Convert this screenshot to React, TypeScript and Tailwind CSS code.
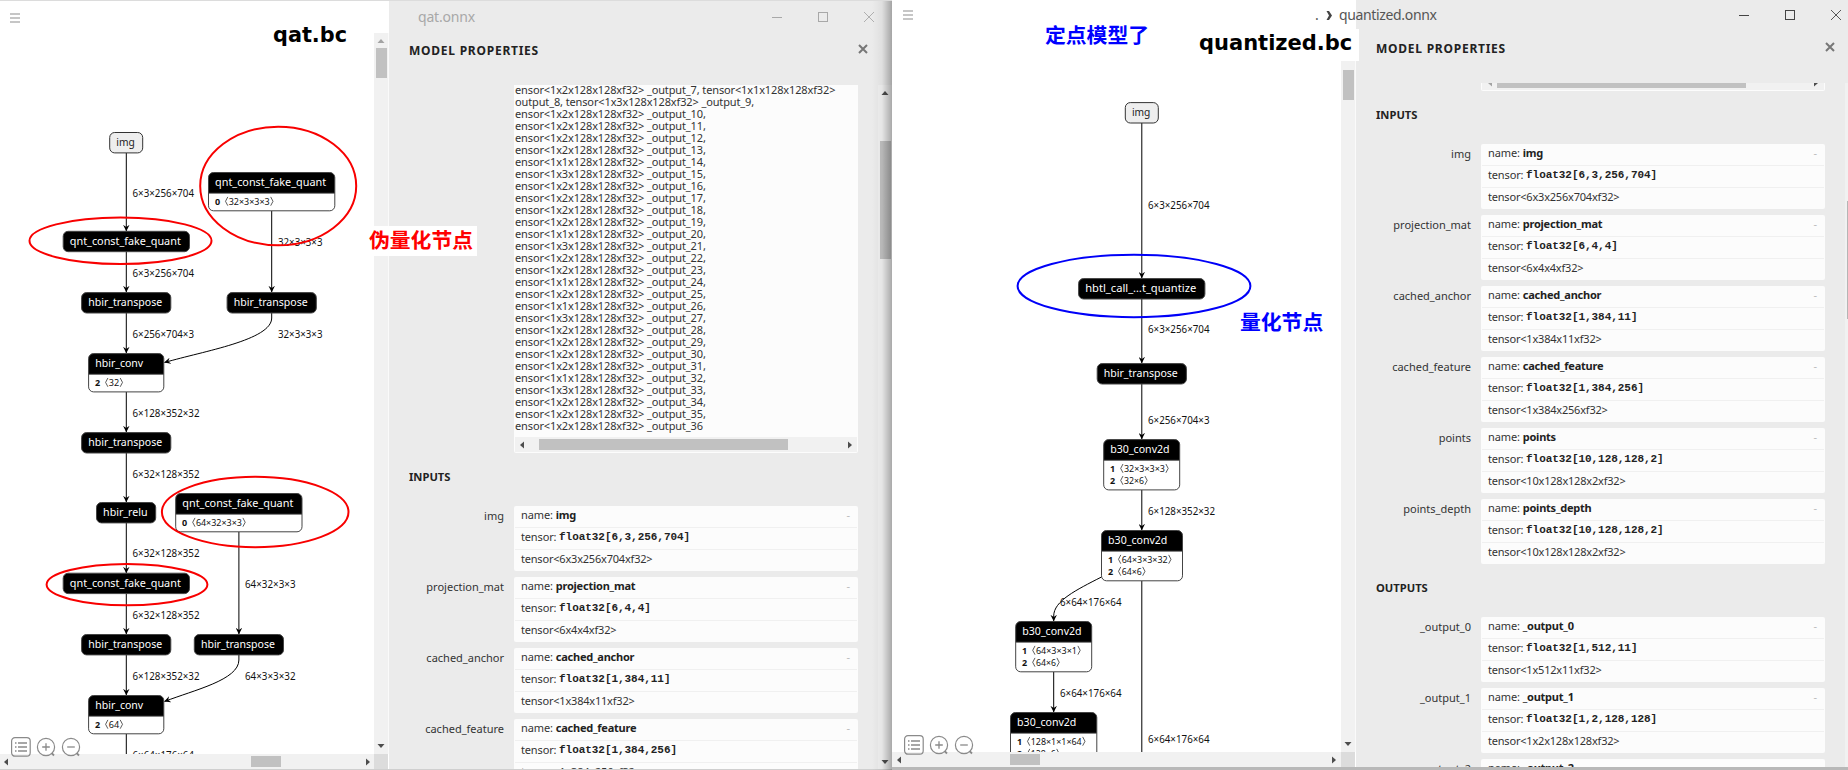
import React from "react";

type Edge = { d: string; arrow?: boolean };
type GNode = {
  x: number;
  y: number;
  w: number;
  name: string;
  nameWidth: number;
  attrs?: { key: string; value: string; width: number }[];
  input?: boolean;
};
type Label = { x: number; y: number; text: string; width: number };

const leftNodes: GNode[] = [
  { x: 109.7, y: 132.5, w: 33, name: "img", nameWidth: 18.5, input: true },
  { x: 208.5, y: 172.5, w: 126.3, name: "qnt_const_fake_quant", nameWidth: 111, attrs: [{ key: "0", value: "32×3×3×3", width: 41 }] },
  { x: 63.2, y: 231.3, w: 126.3, name: "qnt_const_fake_quant", nameWidth: 111 },
  { x: 81.6, y: 292.6, w: 89.2, name: "hbir_transpose", nameWidth: 74 },
  { x: 227.1, y: 292.6, w: 89.2, name: "hbir_transpose", nameWidth: 74 },
  { x: 88.6, y: 353.6, w: 75.2, name: "hbir_conv", nameWidth: 48, attrs: [{ key: "2", value: "32", width: 10.4 }] },
  { x: 81.6, y: 432.6, w: 89.2, name: "hbir_transpose", nameWidth: 74 },
  { x: 96.5, y: 502.5, w: 59.2, name: "hbir_relu", nameWidth: 44.5 },
  { x: 175.7, y: 493.5, w: 126.3, name: "qnt_const_fake_quant", nameWidth: 111, attrs: [{ key: "0", value: "64×32×3×3", width: 46 }] },
  { x: 63.2, y: 573.2, w: 126.3, name: "qnt_const_fake_quant", nameWidth: 111 },
  { x: 81.6, y: 634.5, w: 89.2, name: "hbir_transpose", nameWidth: 74 },
  { x: 194.3, y: 634.5, w: 89.2, name: "hbir_transpose", nameWidth: 74 },
  { x: 88.6, y: 695.5, w: 75.2, name: "hbir_conv", nameWidth: 48, attrs: [{ key: "2", value: "64", width: 10.4 }] },
];

const leftLabels: Label[] = [
  { x: 132.5, y: 197, text: "6×3×256×704", width: 61.5 },
  { x: 132.5, y: 277, text: "6×3×256×704", width: 61.5 },
  { x: 278, y: 246, text: "32×3×3×3", width: 44.5 },
  { x: 278, y: 338, text: "32×3×3×3", width: 44.5 },
  { x: 132.5, y: 338, text: "6×256×704×3", width: 61.5 },
  { x: 132.5, y: 417, text: "6×128×352×32", width: 67 },
  { x: 132.5, y: 478, text: "6×32×128×352", width: 67 },
  { x: 132.5, y: 557, text: "6×32×128×352", width: 67 },
  { x: 132.5, y: 619, text: "6×32×128×352", width: 67 },
  { x: 245, y: 588, text: "64×32×3×3", width: 50.5 },
  { x: 245, y: 680, text: "64×3×3×32", width: 50.5 },
  { x: 132.5, y: 680, text: "6×128×352×32", width: 67 },
  { x: 132.5, y: 759, text: "6×64×176×64", width: 61.5 },
];

const leftEdges: Edge[] = [
  { d: "M126.3 153V231" },
  { d: "M126.3 251V292" },
  { d: "M126.3 313V353" },
  { d: "M126.3 392V432" },
  { d: "M126.3 453V502" },
  { d: "M126.3 523V573" },
  { d: "M126.3 593V634" },
  { d: "M126.3 655V695" },
  { d: "M126.3 734V770", arrow: false },
  { d: "M271.7 211V292" },
  { d: "M271.7 313V318C271.7 340 204 351 164.5 362.5" },
  { d: "M238.9 532V634" },
  { d: "M238.9 655V660C238.9 680 194 690 164.5 701.5" },
];

const rightNodes: GNode[] = [
  { x: 1125.3, y: 102.6, w: 33, name: "img", nameWidth: 18.5, input: true },
  { x: 1078.6, y: 278.6, w: 126.3, name: "hbtl_call_…t_quantize", nameWidth: 111 },
  { x: 1097.2, y: 363.6, w: 89.2, name: "hbir_transpose", nameWidth: 74 },
  { x: 1103.7, y: 439.6, w: 76, name: "b30_conv2d", nameWidth: 59.3, attrs: [{ key: "1", value: "32×3×3×3", width: 41 }, { key: "2", value: "32×6", width: 20 }] },
  { x: 1101.5, y: 530.5, w: 81, name: "b30_conv2d", nameWidth: 59.3, attrs: [{ key: "1", value: "64×3×3×32", width: 46 }, { key: "2", value: "64×6", width: 20 }] },
  { x: 1015.7, y: 621.5, w: 76, name: "b30_conv2d", nameWidth: 59.3, attrs: [{ key: "1", value: "64×3×3×1", width: 41 }, { key: "2", value: "64×6", width: 20 }] },
  { x: 1010.5, y: 712.5, w: 86.3, name: "b30_conv2d", nameWidth: 59.3, attrs: [{ key: "1", value: "128×1×1×64", width: 51 }, { key: "2", value: "128×6", width: 25 }] },
];

const rightLabels: Label[] = [
  { x: 1148, y: 209, text: "6×3×256×704", width: 61.5 },
  { x: 1148, y: 333, text: "6×3×256×704", width: 61.5 },
  { x: 1148, y: 424, text: "6×256×704×3", width: 61.5 },
  { x: 1148, y: 515, text: "6×128×352×32", width: 67 },
  { x: 1060, y: 606, text: "6×64×176×64", width: 61.5 },
  { x: 1060, y: 697, text: "6×64×176×64", width: 61.5 },
  { x: 1148, y: 743, text: "6×64×176×64", width: 61.5 },
];

const rightEdges: Edge[] = [
  { d: "M1141.8 123V278" },
  { d: "M1141.8 299V363" },
  { d: "M1141.8 384V439" },
  { d: "M1141.8 490V530" },
  { d: "M1141.8 581V760", arrow: false },
  { d: "M1101.5 577C1076 590 1053.7 601 1053.7 616V621" },
  { d: "M1053.7 672V712" },
];

function topRounded(x: number, y: number, w: number, h: number, r: number) {
  return `M${x} ${y + h}V${y + r}a${r} ${r} 0 0 1 ${r} ${-r}h${w - 2 * r}a${r} ${r} 0 0 1 ${r} ${r}V${y + h}z`;
}

function NodeShape({ node }: { node: GNode }) {
  const { x, y, w, attrs } = node;
  const height = attrs ? 26.3 + attrs.length * 12 : 20.4;
  return (
    <g>
      <rect x={x} y={y} width={w} height={height} rx={5} fill={node.input ? "#eeeeee" : attrs ? "#ffffff" : "#000000"} />
      {attrs && <path d={topRounded(x, y, w, 20.4, 5)} fill="#000" />}
      {attrs && <path d={`M${x} ${y + 20.6}h${w}`} stroke="#333" />}
      <rect x={x} y={y} width={w} height={height} rx={5} fill="none" stroke={node.input ? "#333" : "#444"} strokeWidth={1} />
      <text x={x + 6.6} y={y + 13.4} fontSize={11} fill={node.input ? "#222" : "#fff"} textLength={node.nameWidth} lengthAdjust="spacingAndGlyphs">
        {node.name}
      </text>
      {attrs?.map((a, i) => {
        const ty = y + 32 + i * 12;
        return (
          <g key={a.key} fontSize={9} fill="#111">
            <text x={x + 6.4} y={ty} fontWeight={700}>{a.key}</text>
            <path d={`M${x + 19.3} ${ty - 7.6}l-2.3 4.4l2.3 4.4M${x + 20.2 + a.width + 1} ${ty - 7.6}l2.3 4.4l-2.3 4.4`} fill="none" stroke="#333" strokeWidth={0.8} />
            <text x={x + 20.2} y={ty} textLength={a.width} lengthAdjust="spacingAndGlyphs">{a.value}</text>
          </g>
        );
      })}
    </g>
  );
}

function Graph(props: {
  box: [number, number, number, number];
  marker: string;
  nodes: GNode[];
  edges: Edge[];
  labels: Label[];
}) {
  const [x, y, w, h] = props.box;
  return (
    <svg width={w} height={h} viewBox={`${x} ${y} ${w} ${h}`} className="block shrink-0 font-['Noto_Sans','Noto_Sans_CJK_SC',sans-serif]">
      <defs>
        <marker id={props.marker} viewBox="0 0 10 10" refX="9.5" refY="5" markerWidth="6.5" markerHeight="6.5" markerUnits="userSpaceOnUse" orient="auto">
          <path d="M0 0L10 5L0 10L3.5 5z" />
        </marker>
      </defs>
      {props.edges.map((e, i) => (
        <path key={i} d={e.d} fill="none" stroke="#000" strokeWidth={1} markerEnd={e.arrow === false ? undefined : `url(#${props.marker})`} />
      ))}
      {props.labels.map((l, i) => (
        <text key={i} x={l.x} y={l.y} fontSize={10} fill="#111" textLength={l.width} lengthAdjust="spacingAndGlyphs">{l.text}</text>
      ))}
      {props.nodes.map((n, i) => (
        <NodeShape key={i} node={n} />
      ))}
    </svg>
  );
}

function Arrow({ dir, color = "#4d4d4d" }: { dir: "up" | "down" | "left" | "right"; color?: string }) {
  const d = {
    up: "M0.5 6L4 2L7.5 6z",
    down: "M0.5 2L4 6L7.5 2z",
    left: "M6 0.5L2 4L6 7.5z",
    right: "M2 0.5L6 4L2 7.5z",
  }[dir];
  return (
    <svg width="8" height="8" viewBox="0 0 8 8" className="block shrink-0">
      <path d={d} fill={color} />
    </svg>
  );
}

function MenuIcon() {
  return (
    <svg width="10" height="10" viewBox="0 0 10 10" className="block">
      <path d="M0 1h10M0 5h10M0 9h10" stroke="#b4b4b4" strokeWidth="1.4" />
    </svg>
  );
}

function Toolbar() {
  return (
    <svg width="72" height="22" viewBox="0 0 72 22" fill="none" stroke="#8a8a8a" className="block">
      <rect x="1.6" y="1.6" width="18.6" height="18.6" rx="3.4" strokeWidth="1.2" />
      <path d="M8 7h9M8 11h9M8 15h9" strokeWidth="1.3" />
      <path d="M5 7h1.5M5 11h1.5M5 15h1.5" strokeWidth="1.3" />
      <circle cx="36" cy="11" r="8.6" strokeWidth="1.2" />
      <path d="M32.2 11h7.6M36 7.2v7.6" strokeWidth="1.3" />
      <path d="M41.5 17L44 19.5" strokeWidth="1.8" />
      <circle cx="61" cy="11" r="8.6" strokeWidth="1.2" />
      <path d="M57.2 11h7.6" strokeWidth="1.3" />
      <path d="M66.5 17L69 19.5" strokeWidth="1.8" />
    </svg>
  );
}

function WindowButtons({ color }: { color: string }) {
  return (
    <svg width="104" height="12" viewBox="0 0 104 12" fill="none" stroke={color} className="block shrink-0">
      <path d="M1 6.5h10" />
      <rect x="47.5" y="1.5" width="9" height="9" />
      <path d="M93 1l10 10M103 1L93 11" strokeWidth="0.9" />
    </svg>
  );
}

type Tensor = { name: string; shape: string; type: string };

const inputs: Tensor[] = [
  { name: "img", shape: "float32[6,3,256,704]", type: "tensor<6x3x256x704xf32>" },
  { name: "projection_mat", shape: "float32[6,4,4]", type: "tensor<6x4x4xf32>" },
  { name: "cached_anchor", shape: "float32[1,384,11]", type: "tensor<1x384x11xf32>" },
  { name: "cached_feature", shape: "float32[1,384,256]", type: "tensor<1x384x256xf32>" },
  { name: "points", shape: "float32[10,128,128,2]", type: "tensor<10x128x128x2xf32>" },
  { name: "points_depth", shape: "float32[10,128,128,2]", type: "tensor<10x128x128x2xf32>" },
];

const outputs: Tensor[] = [
  { name: "_output_0", shape: "float32[1,512,11]", type: "tensor<1x512x11xf32>" },
  { name: "_output_1", shape: "float32[1,2,128,128]", type: "tensor<1x2x128x128xf32>" },
  { name: "_output_2", shape: "float32[1,1,128,128]", type: "tensor<1x1x128x128xf32>" },
];

function TensorCard({ tensor }: { tensor: Tensor }) {
  return (
    <div className="mb-[6px] flex h-[65px] shrink-0 text-[11px] text-[#333]">
      <div className="mr-[10px] w-[115px] shrink-0 text-right leading-[19px]">{tensor.name}</div>
      <div className="w-[344px] shrink-0 rounded-[2px] bg-[#fcfcfc] px-px">
        <div className="flex h-[22px] items-center border-b border-[#f0f0f0] pr-[7px] pb-[2px] pl-[6px] whitespace-pre">
          <span className="grow tracking-[-0.1px]">name: <b className="tracking-[-0.22px] text-[#222]">{tensor.name}</b></span>
          <span className="text-[#bbb]">-</span>
        </div>
        <div className="flex h-[22px] items-center border-b border-[#f0f0f0] pb-[2px] pl-[6px] tracking-[-0.15px] whitespace-pre">
          tensor: <b className="font-['Liberation_Mono',monospace] tracking-[-0.05px] text-[#222]">{tensor.shape}</b>
        </div>
        <div className="flex h-[21px] items-center pb-[2px] pl-[6px] tracking-[-0.2px]">{tensor.type}</div>
      </div>
    </div>
  );
}

function SectionTitle({ children }: { children: React.ReactNode }) {
  return (
    <div className="h-[53px] shrink-0 pt-[15px] pl-[20px] text-[11.2px] leading-[17px] font-bold text-[#222]">{children}</div>
  );
}

function Heading() {
  return (
    <div className="flex h-[22px] shrink-0 items-center justify-between pr-[24px] pl-[20px] text-[#222]">
      <span className="text-[12px] font-bold tracking-[0.75px]">MODEL PROPERTIES</span>
      <svg width="10" height="10" viewBox="0 0 10 10" className="relative -top-[2px] block">
        <path d="M1 1l8 8M9 1L1 9" stroke="#777" strokeWidth="2" />
      </svg>
    </div>
  );
}

const kinds = [2, 2, 2, 2, 1, 3, 2, 2, 2, 2, 1, 3, 2, 2, 1, 2, 1, 3, 2, 2, 2, 2, 1, 3, 2, 2, 2];
const signature = [
  "ensor<1x2x128x128xf32> _output_7, tensor<1x1x128x128xf32>",
  "output_8, tensor<1x3x128x128xf32> _output_9,",
  ...kinds.map((k, i) => `ensor<1x${k}x128x128xf32> _output_${i + 10}${i === kinds.length - 1 ? "" : ","}`),
];

function BrowserWindowLeft() {
  return (
    <section className="absolute top-0 left-0 flex h-[770px] w-[892px] border-t border-[#dcdcdc] bg-white">
      <div className="relative flex w-[389px] shrink-0 flex-col">
        <div className="flex h-[753px]">
          <Graph box={[0, 1, 374, 753]} marker="tipA" nodes={leftNodes} edges={leftEdges} labels={leftLabels} />
          <div className="mt-[32px] flex w-[15px] flex-col items-center border-r border-[#fafafa] bg-[#f1f1f1] pt-1 pb-1">
            <Arrow dir="up" color="#a3a3a3" />
            <div className="mt-[3px] h-[30px] w-[11px] bg-[#c1c1c1]" />
            <div className="grow" />
            <Arrow dir="down" />
          </div>
        </div>
        <div className="flex h-[15px] shrink-0">
          <div className="flex w-[374px] items-center bg-[#f1f1f1] px-[2px]">
            <Arrow dir="left" />
            <div className="ml-[241px] h-[11px] w-[30px] bg-[#c1c1c1]" />
            <div className="grow" />
            <Arrow dir="right" />
          </div>
          <div className="w-[14px] bg-[#dcdcdc]" />
        </div>
        <div className="absolute top-[12px] left-[10px]"><MenuIcon /></div>
        <div className="absolute top-[735px] left-[10px]"><Toolbar /></div>
      </div>
      <div className="flex w-[503px] shrink-0 flex-col overflow-hidden bg-[#ebebeb]">
        <div className="flex h-[31px] shrink-0 items-center justify-between pr-[17px] pl-[29px]">
          <span className="text-[14px] tracking-[-0.2px] text-[#a8a8a8]">qat.onnx</span>
          <WindowButtons color="#a8a8a8" />
        </div>
        <div className="mt-[8px]"><Heading /></div>
        <div className="mt-[23px] flex min-h-0 grow">
          <div className="flex w-[489px] shrink-0 flex-col overflow-hidden">
            <div className="ml-[125px] flex h-[368px] w-[344px] shrink-0 flex-col rounded-b-[2px] bg-[#fcfcfc] px-px pb-px">
              <div className="grow overflow-hidden text-[11px] leading-[12px] tracking-[-0.13px] whitespace-pre text-[#333]">
                <div className="-mt-px">
                  {signature.map((line) => (
                    <div key={line}>{line}</div>
                  ))}
                </div>
              </div>
              <div className="flex h-[15px] shrink-0 items-center bg-[#f1f1f1] px-[3px]">
                <Arrow dir="left" />
                <div className="ml-[13px] h-[11px] w-[249px] bg-[#c1c1c1]" />
                <div className="grow" />
                <Arrow dir="right" />
              </div>
            </div>
            <SectionTitle>INPUTS</SectionTitle>
            {inputs.slice(0, 4).map((t) => (
              <TensorCard key={t.name} tensor={t} />
            ))}
          </div>
          <div className="flex w-[14px] flex-col items-center bg-[#f1f1f1] pt-1 pb-[4px]">
            <Arrow dir="up" />
            <div className="mt-[44px] h-[118px] w-[11px] bg-[#c1c1c1]" />
            <div className="grow" />
            <Arrow dir="down" />
          </div>
        </div>
      </div>
      <div className="absolute bottom-0 left-0 h-px w-full bg-[#cfcfcf]" />
      <div className="absolute top-0 right-0 h-full w-[20px] bg-gradient-to-r from-black/0 via-black/5 to-black/30" />
    </section>
  );
}

function BrowserWindowRight() {
  return (
    <section className="absolute top-0 left-[892px] flex h-[767px] w-[956px] overflow-hidden bg-white">
      <div className="relative flex w-[464px] shrink-0 flex-col">
        <div className="flex h-[752px]">
          <Graph box={[892, 0, 449, 752]} marker="tipB" nodes={rightNodes} edges={rightEdges} labels={rightLabels} />
          <div className="mt-[61px] flex w-[15px] flex-col items-center border-r border-[#fafafa] bg-[#f1f1f1] pb-1">
            <div className="mt-[9px] h-[30px] w-[11px] bg-[#c1c1c1]" />
            <div className="grow" />
            <Arrow dir="down" />
          </div>
        </div>
        <div className="flex h-[15px] shrink-0">
          <div className="flex w-[449px] items-center bg-[#f1f1f1] px-[3px]">
            <Arrow dir="left" />
            <div className="ml-[107px] h-[11px] w-[30px] bg-[#c1c1c1]" />
            <div className="grow" />
            <Arrow dir="right" />
          </div>
          <div className="w-[14px] bg-[#dcdcdc]" />
        </div>
        <div className="absolute top-[10px] left-[11px]"><MenuIcon /></div>
        <div className="absolute top-[734px] left-[11px]"><Toolbar /></div>
      </div>
      <div className="flex w-[492px] shrink-0 flex-col bg-[#ebebeb]">
        <div className="flex h-[30px] shrink-0 items-center justify-end pr-[6px] pb-px">
          <WindowButtons color="#444" />
        </div>
        <div className="mt-[8px] w-[503px]"><Heading /></div>
        <div className="mt-[23px] flex min-h-0 grow">
          <div className="flex w-[489px] shrink-0 flex-col overflow-hidden">
            <div className="ml-[125px] flex h-[8px] w-[344px] shrink-0 flex-col justify-end overflow-hidden rounded-b-[2px] bg-[#fcfcfc] px-px pb-px">
              <div className="flex h-[15px] shrink-0 items-center bg-[#f1f1f1] px-[4px]">
                <Arrow dir="left" color="#a3a3a3" />
                <div className="ml-[3px] h-[11px] w-[249px] bg-[#c1c1c1]" />
                <div className="grow" />
                <Arrow dir="right" />
              </div>
            </div>
            <SectionTitle>INPUTS</SectionTitle>
            {inputs.map((t) => (
              <TensorCard key={t.name} tensor={t} />
            ))}
            <div className="-mt-[6px] shrink-0"><SectionTitle>OUTPUTS</SectionTitle></div>
            {outputs.map((t) => (
              <TensorCard key={t.name} tensor={t} />
            ))}
          </div>
          <div className="flex w-[3px] justify-end bg-[#f1f1f1]">
            <div className="mt-[118px] h-[118px] w-px bg-[#b5b5b5]" />
          </div>
        </div>
      </div>
      <div className="absolute top-[5px] left-[423px] flex items-center text-[14px] leading-[20px] text-[#555]">
        <span className="w-[11px]">.</span>
        <svg width="6" height="9" viewBox="0 0 6 9" className="mr-[7px] block"><path d="M0.5 0H3L6 4.5L3 9H0.5L3 4.5z" fill="#444" /></svg>
        <span className="tracking-[-0.35px]">quantized.onnx</span>
      </div>
    </section>
  );
}

function Annotations() {
  return (
    <>
      <svg width="1848" height="770" viewBox="0 0 1848 770" fill="none" strokeWidth="2" className="pointer-events-none absolute top-0 left-0">
        <g stroke="#f80000">
          <ellipse cx="278.2" cy="186" rx="78" ry="59.3" />
          <ellipse cx="120.5" cy="240.8" rx="91" ry="23.2" />
          <ellipse cx="255.2" cy="512" rx="93.3" ry="35.2" />
          <ellipse cx="127" cy="584.6" rx="80.4" ry="20.6" />
        </g>
        <ellipse cx="1134" cy="286" rx="116.4" ry="31.2" stroke="#0000f8" />
      </svg>
      <div className="absolute top-[27px] left-[273px] font-['DejaVu_Sans',sans-serif] text-[20.8px] leading-[16px] font-bold text-black">qat.bc</div>
      <div className="absolute top-[29px] left-[1190px] h-[32px] w-[169px] bg-white pl-[9px] font-['DejaVu_Sans',sans-serif] text-[21px] leading-[28px] font-bold text-black">quantized.bc</div>
      <div className="absolute top-[226px] left-[369px] h-[30px] w-[108px] bg-white font-['Noto_Sans_CJK_SC',sans-serif] text-[20.8px] leading-[26px] font-bold whitespace-nowrap text-[#ff0000]">伪量化节点</div>
      <div className="absolute top-[21px] left-[1045px] font-['Noto_Sans_CJK_SC',sans-serif] text-[20.8px] leading-[27px] font-bold whitespace-nowrap text-[#0000ff]">定点模型了</div>
      <div className="absolute top-[308px] left-[1240px] font-['Noto_Sans_CJK_SC',sans-serif] text-[20.8px] leading-[27px] font-bold whitespace-nowrap text-[#0000ff]">量化节点</div>
    </>
  );
}

export default function App() {
  return (
    <main className="relative h-[770px] w-[1848px] overflow-hidden bg-[#b8b8b8] font-['Noto_Sans','Noto_Sans_CJK_SC',sans-serif]">
      <BrowserWindowLeft />
      <BrowserWindowRight />
      <Annotations />
    </main>
  );
}
